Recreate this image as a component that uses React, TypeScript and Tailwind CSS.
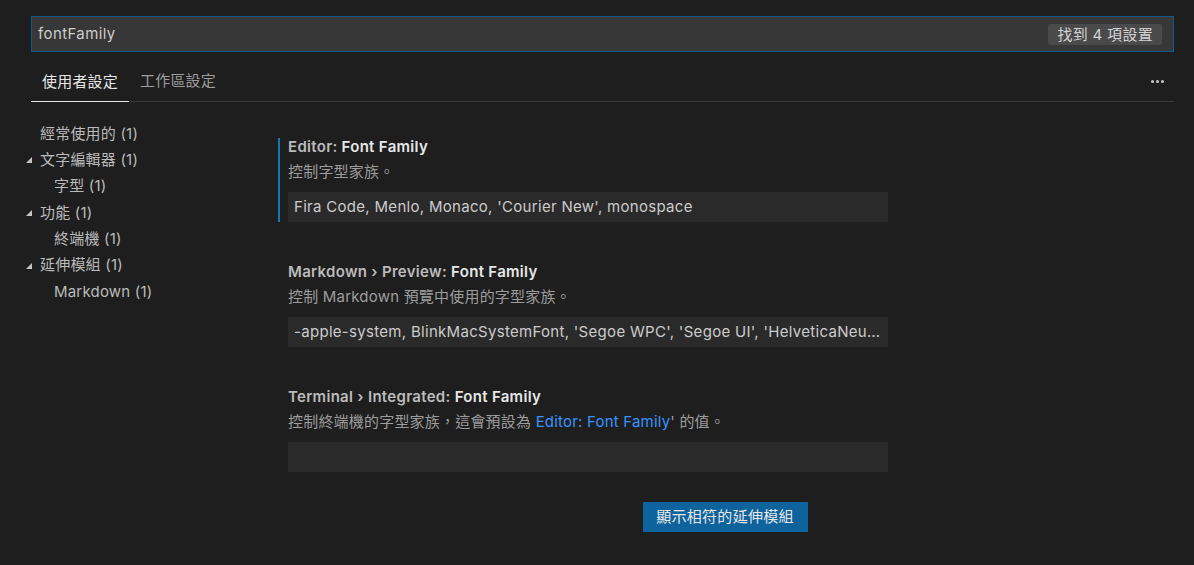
import { MoreHorizontal } from 'lucide-react';

const font = { fontFamily: 'Inter, "Noto Sans CJK TC", sans-serif' };

function Twisty() {
  return (
    <svg width="6" height="6" viewBox="0 0 6 6" className="shrink-0">
      <polygon points="6,0 6,6 0,6" fill="#c5c5c5" />
    </svg>
  );
}

function TreeItem({ label, level, expandable }: { label: string; level: number; expandable?: boolean }) {
  return (
    <div className="flex h-[26.3px] items-center">
      <div className="flex w-[14px] items-center">{expandable && <Twisty />}</div>
      <span className={level === 1 ? 'pl-[14px]' : ''}>{label}</span>
    </div>
  );
}

function Setting({
  category,
  name,
  desc,
  value,
  focused,
}: {
  category: string;
  name: string;
  desc: React.ReactNode;
  value: string;
  focused?: boolean;
}) {
  return (
    <div className={`border-l-2 pl-[8px] ${focused ? 'border-[#0e7ab8]' : 'border-transparent'}`}>
      <div className="w-[600px]">
        <div className="pt-[1px] text-[15px] leading-[16px] font-semibold tracking-[0.3px] text-[#bbbbbb]">
          {category}
          <span className="text-[#e7e7e7]">{name}</span>
        </div>
        <div className="mt-[9px] h-[16px] text-[15px] leading-[16px] tracking-[0.2px] text-[#9d9d9d]">{desc}</div>
        <div className="mt-[12px] flex h-[30px] items-center bg-[#2a2a2a] px-[6px] text-[15px] tracking-[0.3px] text-[#cccccc]">
          <span className="truncate">{value}</span>
        </div>
      </div>
    </div>
  );
}

export default function App() {
  return (
    <div className="h-[565px] w-[1194px] overflow-hidden bg-[#1e1e1e]" style={font}>
      <div className="pl-[31px] pr-[20px] pt-[16px]">
        <div className="flex h-[36px] items-center border border-[#0e5a8a] bg-[#373737] pl-[6px] pr-[11px]">
          <span className="flex-1 text-[15px] tracking-[0.4px] text-[#cccccc]">fontFamily</span>
          <span className="rounded-[2px] bg-[#4a4a4a] px-[9px] py-[2px] text-[15px] leading-[17px] tracking-[0.3px] text-[#d4d4d4]">
            找到 4 項設置
          </span>
        </div>
        <div className="flex h-[50px] items-end border-b border-[#3a3a3a]">
          <div className="-mb-px flex h-[50px] items-center border-b border-[#e7e7e7] px-[11px] pt-[11px] text-[15px] tracking-[0.2px] text-[#e7e7e7]">
            使用者設定
          </div>
          <div className="flex h-[50px] items-center px-[11px] pt-[11px] text-[15px] tracking-[0.2px] text-[#9d9d9d]">
            工作區設定
          </div>
          <div className="flex-1" />
          <div className="flex h-[50px] items-center pr-[8px] pt-[11px] text-[#c5c5c5]">
            <MoreHorizontal size={17} strokeWidth={2.5} />
          </div>
        </div>
      </div>
      <div className="flex">
        <div className="w-[278px] shrink-0 pl-[26px] pt-[19px] text-[15px] tracking-[0.2px] text-[#bbbbbb]">
          <TreeItem label="經常使用的 (1)" level={0} />
          <TreeItem label="文字編輯器 (1)" level={0} expandable />
          <TreeItem label="字型 (1)" level={1} />
          <TreeItem label="功能 (1)" level={0} expandable />
          <TreeItem label="終端機 (1)" level={1} />
          <TreeItem label="延伸模組 (1)" level={0} expandable />
          <TreeItem label="Markdown (1)" level={1} />
        </div>
        <div className="flex flex-1 flex-col pr-[22px] pt-[36px]">
          <div className="flex flex-col gap-[41px]">
            <Setting
              focused
              category="Editor: "
              name="Font Family"
              desc="控制字型家族。"
              value="Fira Code, Menlo, Monaco, 'Courier New', monospace"
            />
            <Setting
              category="Markdown › Preview: "
              name="Font Family"
              desc="控制 Markdown 預覽中使用的字型家族。"
              value="-apple-system, BlinkMacSystemFont, 'Segoe WPC', 'Segoe UI', 'HelveticaNeue-Light', 'Ubuntu', 'Droid Sans', sans-serif"
            />
            <Setting
              category="Terminal › Integrated: "
              name="Font Family"
              desc={
                <>
                  控制終端機的字型家族，這會預設為 <span className="text-[#3794ff]">Editor: Font Family</span>' 的值。
                </>
              }
              value=""
            />
          </div>
          <div className="mt-[30px] flex justify-center">
            <button className="h-[30px] w-[165px] bg-[#0e639c] text-[15px] tracking-[0.3px] text-[#e7e7e7]">顯示相符的延伸模組</button>
          </div>
        </div>
      </div>
    </div>
  );
}
